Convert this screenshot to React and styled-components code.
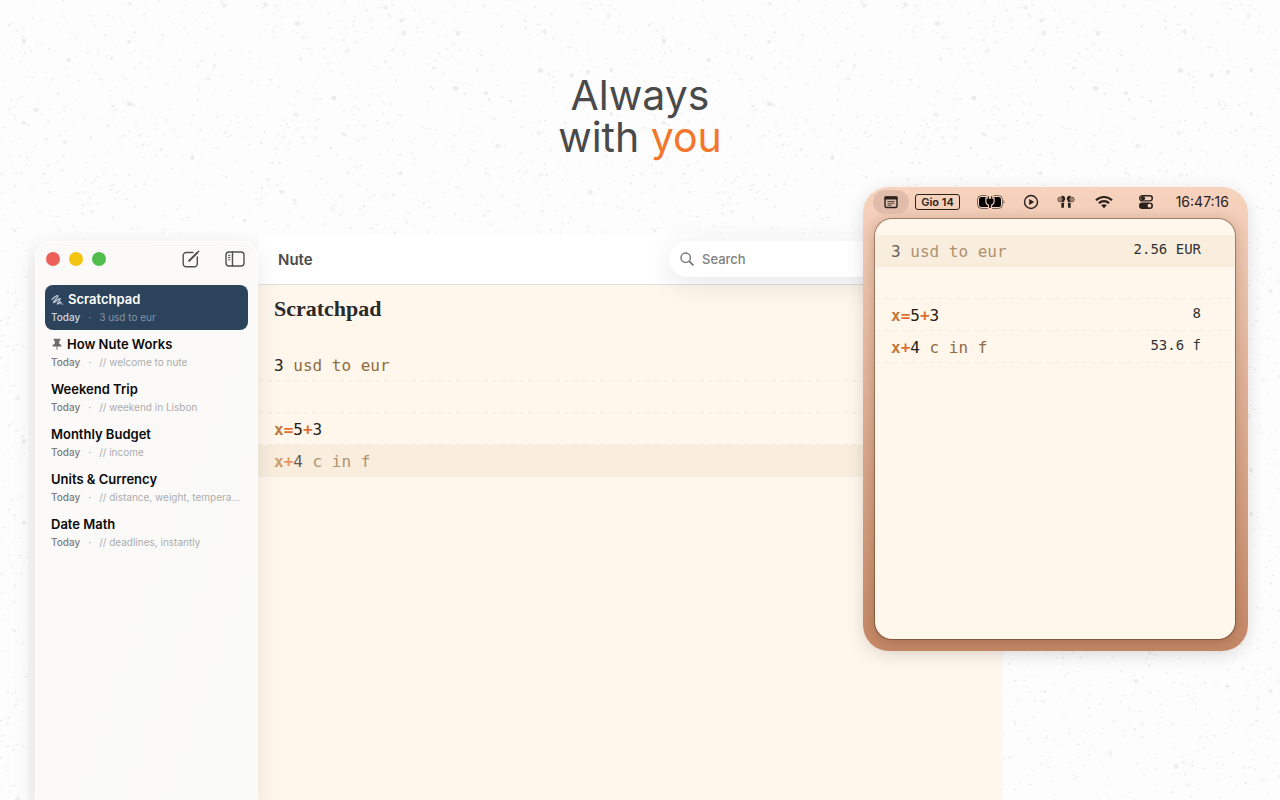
import React from "react";
import styled, { createGlobalStyle } from "styled-components";

const sans = `Inter, "Liberation Sans", sans-serif`;
const mono = `"DejaVu Sans Mono", "Liberation Mono", monospace`;

const GlobalStyle = createGlobalStyle`
  * {
    box-sizing: border-box;
  }
  body {
    margin: 0;
    background: #fdfdfd;
    font-family: ${sans};
    color: #1d1d1f;
  }
  h1, h2, ul {
    margin: 0;
    padding: 0;
  }
  button {
    border: 0;
    padding: 0;
    background: none;
    font: inherit;
    color: inherit;
  }
`;

const Page = styled.main`
  position: relative;
  display: flex;
  flex-direction: column;
  height: 100vh;
  min-height: 680px;
  overflow: hidden;
`;

const Paper = styled.svg`
  position: absolute;
  inset: 0;
  width: 100%;
  height: 100%;
`;

const Headline = styled.h1`
  position: relative;
  padding: 74px 0 29px;
  font-size: 41px;
  line-height: 42px;
  font-weight: 400;
  text-align: center;
  color: #4a4a4a;
  span {
    color: #f2762c;
  }
`;

const Stage = styled.div`
  position: relative;
  flex: 1;
  display: flex;
  padding: 47px 278px 0 28px;
`;

const Window = styled.section`
  flex: 1;
  display: grid;
  grid-template-columns: 230px 1fr;
  border-radius: 20px 0 0 0;
  background: linear-gradient(#fcfcfc, #f7f7f7 40px);
`;

const Sidebar = styled.aside`
  position: relative;
  z-index: 1;
  margin: 7px 0 0 7px;
  padding: 0 10px;
  border: 1px solid #fff;
  border-bottom: 0;
  border-radius: 16px 16px 0 0;
  background: linear-gradient(110deg, #fbfaf8, #f9f9f8);
  box-shadow: 0 8px 26px rgba(0, 0, 0, 0.09);
`;

const SidebarTop = styled.div`
  display: flex;
  align-items: center;
  height: 34px;
  gap: 9px;
  margin-bottom: 9px;
`;

const Light = styled.button`
  width: 14px;
  height: 14px;
  border-radius: 50%;
  background: ${(p) => p.$color};
`;

const ToolButton = styled.button`
  display: flex;
  margin-left: ${(p) => (p.$first ? "auto" : "16px")};
  margin-right: ${(p) => (p.$first ? "0" : "2px")};
`;

const NoteList = styled.ul`
  list-style: none;
  margin: 0 -1px;
`;

const NoteButton = styled.button`
  display: block;
  width: 100%;
  height: 45px;
  padding: 1px 6px 0;
  border-radius: 8px;
  text-align: left;
  color: ${(p) => (p.$active ? "#fff" : "#0b0b0b")};
  background: ${(p) => (p.$active ? "#2c435c" : "transparent")};
`;

const NoteName = styled.span`
  display: flex;
  align-items: center;
  gap: 4px;
  font-size: 13px;
  line-height: 19px;
  font-weight: 600;
`;

const NoteMeta = styled.span`
  display: flex;
  gap: 8px;
  font-size: 10px;
  line-height: 17px;
  color: ${(p) => (p.$active ? "#8492a3" : "#adadad")};
  b {
    font-weight: 500;
    color: ${(p) => (p.$active ? "#cfd6dd" : "#7c7c7c")};
  }
  span {
    overflow: hidden;
    white-space: nowrap;
    text-overflow: ellipsis;
  }
`;

const Main = styled.div`
  display: flex;
  flex-direction: column;
  min-width: 0;
  background: #fff6ec;
`;

const TitleBar = styled.header`
  display: flex;
  align-items: center;
  justify-content: space-between;
  height: 51px;
  padding: 0 10px 0 20px;
  border-bottom: 1px solid #dfdfe3;
  background: #fff;
  font-size: 15px;
  font-weight: 600;
  color: #4c4c4c;
`;

const SearchBox = styled.label`
  display: flex;
  align-items: center;
  gap: 8px;
  width: 323px;
  height: 36px;
  padding: 0 11px;
  border-radius: 18px;
  background: #fff;
  box-shadow: 0 6px 30px rgba(0, 0, 0, 0.1);
  input {
    flex: 1;
    min-width: 0;
    padding: 0;
    border: 0;
    outline: 0;
    background: none;
    font: 500 13px ${sans};
  }
  input::placeholder {
    color: #808080;
  }
`;

const DocTitle = styled.h2`
  height: 64px;
  padding: 8px 16px;
  font-family: "Liberation Serif", serif;
  font-size: 22px;
  line-height: 32px;
  font-weight: 700;
  color: #2a2a2a;
`;

const Line = styled.div`
  display: flex;
  justify-content: space-between;
  height: 32px;
  padding: 0 34px 0 16px;
  font-family: ${mono};
  font-size: 16px;
  line-height: 33px;
  white-space: pre;
  background:
    repeating-linear-gradient(90deg, #f6ebde 0 5px, transparent 5px 9px) bottom / 100% 1px no-repeat,
    ${(p) => (p.$current ? "#f9eddd" : "transparent")};
  code {
    font-family: inherit;
    opacity: ${(p) => (p.$current ? 0.7 : 1)};
  }
  output {
    font-size: 14px;
    line-height: 28px;
    color: #333;
  }
`;

const tokenColors = { num: "#231d15", unit: "#8f6c42", name: "#c07a40", op: "#e0702e" };

const Token = styled.span`
  color: ${(p) => tokenColors[p.$kind]};
  font-weight: ${(p) => (p.$kind === "name" || p.$kind === "op" ? 700 : 400)};
`;

const Popover = styled.section`
  position: absolute;
  z-index: 2;
  top: 0;
  right: 32px;
  width: 385px;
  padding: 0 13px 12px 12px;
  border-radius: 26px;
  background: linear-gradient(#f7d3be, #c58866);
  box-shadow: 0 4px 18px rgba(0, 0, 0, 0.13);
`;

const MenuBar = styled.div`
  display: flex;
  align-items: center;
  gap: 18px;
  height: 32px;
  margin: 0 -7px 0 -2px;
  padding: 0 13px 2px 0;
  color: #2a211c;
  button,
  svg {
    display: block;
    flex: none;
  }
`;

const NoteTab = styled.button`
  width: 36px;
  height: 24px;
  padding: 4px 10px;
  border-radius: 12px;
  background: #e0bdaa;
`;

const DateChip = styled.span`
  width: 45px;
  height: 16px;
  margin: 0 -1px 0 -12px;
  border: 1px solid #2a211c;
  border-radius: 3px;
  font-size: 11px;
  line-height: 14px;
  font-weight: 600;
  text-align: center;
`;

const ControlsButton = styled.button`
  padding-left: 8px;
`;

const Clock = styled.time`
  margin-left: auto;
  font-size: 14px;
  line-height: 16px;
`;

const Sheet = styled.div`
  height: 420px;
  padding-top: 16px;
  border-radius: 17px;
  background: #fff6ec;
  box-shadow: 0 0 0 1px rgba(70, 40, 20, 0.4), 0 2px 14px rgba(70, 40, 20, 0.3);
`;

const notes = [
  { name: "Scratchpad", preview: "3 usd to eur", icon: "scribble" },
  { name: "How Nute Works", preview: "// welcome to nute", icon: "pin" },
  { name: "Weekend Trip", preview: "// weekend in Lisbon" },
  { name: "Monthly Budget", preview: "// income" },
  { name: "Units & Currency", preview: "// distance, weight, temperature" },
  { name: "Date Math", preview: "// deadlines, instantly" },
];

const lines = [
  { tokens: [["num", "3"], ["unit", " usd to eur"]], result: "2.56 EUR" },
  { tokens: [] },
  { tokens: [["name", "x"], ["op", "="], ["num", "5"], ["op", "+"], ["num", "3"]], result: "8" },
  { tokens: [["name", "x"], ["op", "+"], ["num", "4"], ["unit", " c in f"]], result: "53.6 f" },
];

// small fixed-seed generator, so the paper looks the same on every load
function makeSpecks(count) {
  let seed = 7;
  const next = () => {
    seed = (seed * 16807) % 2147483647;
    return seed / 2147483647;
  };
  return Array.from({ length: count }, () => {
    const big = next() > 0.96;
    return {
      x: next() * 640,
      y: next() * 400,
      rx: big ? 1.6 + next() * 1.2 : 0.6 + next() * 0.9,
      ry: big ? 1.6 + next() : 0.5 + next() * 0.7,
      o: 0.4 + next() * 0.5,
    };
  });
}

const specks = makeSpecks(1900);

function PaperTexture() {
  return (
    <Paper aria-hidden="true">
      <defs>
        <pattern id="specks" width="640" height="400" patternUnits="userSpaceOnUse">
          {specks.map((s, i) => (
            <ellipse key={i} cx={s.x} cy={s.y} rx={s.rx} ry={s.ry} fill="#e8e8e7" opacity={s.o} />
          ))}
        </pattern>
      </defs>
      <rect width="100%" height="100%" fill="url(#specks)" />
    </Paper>
  );
}

function ScribbleIcon() {
  return (
    <svg width="13" height="12" viewBox="0 0 13 12" fill="none" stroke="#cbd3dc" strokeWidth="1.1" strokeLinecap="round" strokeLinejoin="round">
      <path d="M1 5.5C3.2 3.2 6.2 1 7 1.8C7.8 2.7 1.6 7.9 2.4 8.7C3.2 9.5 8.2 3.6 9.2 4.5C10 5.4 5.6 9.3 6.4 10.1C7.1 10.8 9.3 7.6 10 8.2C10.4 8.600 9.400 9.700 9.900 10" />
      <path d="M11.9 10h.1" />
    </svg>
  );
}

function PinIcon() {
  return (
    <svg width="12" height="13" viewBox="0 0 12 13" fill="#6b6b6b">
      <path d="M2.6.8h6.8v1.5L8.2 3v2.7c1.5.6 2.3 1.4 2.3 2.8h-4v2.3L6 12.6l-.5-1.8V8.5h-4c0-1.4.8-2.2 2.3-2.8V3L2.6 2.3z" />
    </svg>
  );
}

function ComposeIcon() {
  return (
    <svg width="18" height="18" viewBox="0 0 18 18" fill="none" stroke="#505050" strokeWidth="1.4" strokeLinecap="round" strokeLinejoin="round">
      <path d="M11 2.5H4.2a3 3 0 0 0-3 3v8.3a3 3 0 0 0 3 3h8.1a3 3 0 0 0 3-3V7" />
      <path d="M7.2 10.8l8-8" strokeWidth="2" />
      <path d="M16.400 1.600l.2-.2" strokeWidth="1.6" />
    </svg>
  );
}

function SidebarIcon() {
  return (
    <svg width="20" height="16" viewBox="0 0 20 16" fill="none" stroke="#505050" strokeWidth="1.4" strokeLinecap="round">
      <rect x="1" y="1" width="18" height="14" rx="3" />
      <path d="M7.5 1v14" />
      <path d="M3.5 4.2H5M3.5 6.5H5M3.5 8.8H5" strokeWidth="1.1" />
    </svg>
  );
}

function SearchIcon() {
  return (
    <svg width="14" height="14" viewBox="0 0 14 14" fill="none" stroke="#777" strokeWidth="1.4" strokeLinecap="round">
      <circle cx="5.7" cy="5.7" r="4.7" />
      <path d="M9.3 9.3l3.6 3.6" strokeWidth="1.8" />
    </svg>
  );
}

function NoteIcon() {
  return (
    <svg width="16" height="16" viewBox="0 0 16 16" fill="none" stroke="#2a211c">
      <rect x="2" y="3" width="12" height="10.5" rx="1.5" strokeWidth="1.4" />
      <path d="M1.5 4h13" strokeWidth="3" />
      <path d="M4.5 7.5h7M4.5 9.3h7M4.5 11.1h4" strokeWidth="1.1" opacity=".7" />
    </svg>
  );
}

function BatteryIcon() {
  return (
    <svg width="28" height="14" viewBox="0 0 28 14">
      <rect x=".5" y=".5" width="25" height="13" rx="4" fill="none" stroke="#2a211c" opacity=".6" />
      <rect x="2" y="2" width="22" height="10" rx="2.5" fill="#000" />
      <path d="M26.5 5v4c1.4-.4 1.4-3.6 0-4z" fill="#2a211c" opacity=".6" />
      <path
        d="M10.8 1.2h1v2.6h2.4V1.2h1v2.6h1.3v2.7c0 1.800-1 2.700-2.600 3v3.300h-1.800V9.500c-1.600-.3-2.600-1.200-2.600-3V3.800h1.300z"
        fill="#000"
        stroke="#f4cfba"
        strokeWidth="2.4"
        paintOrder="stroke"
      />
    </svg>
  );
}

function PlayIcon() {
  return (
    <svg width="16" height="16" viewBox="0 0 16 16">
      <circle cx="8" cy="8" r="6.5" fill="none" stroke="#2a211c" strokeWidth="1.4" />
      <path d="M6.2 5v6l5-3z" fill="#2a211c" />
    </svg>
  );
}

function AirpodsIcon() {
  return (
    <svg width="18" height="14" viewBox="0 0 18 14" fill="#2a211c">
      <path d="M4.2 1C7 .3 8.3 2.3 8.2 4.3l-1 1.8-.3 6.7H4.3V6.2L5.5 4z" />
      <path d="M13.8 1C11 .3 9.7 2.3 9.8 4.3l1 1.8.3 6.7h2.6V6.2L12.5 4z" />
      <ellipse cx="3" cy="4.5" rx="2.2" ry="2.4" fill="#a98a79" stroke="#5d483c" strokeWidth=".8" />
      <ellipse cx="15" cy="4.5" rx="2.2" ry="2.4" fill="#a98a79" stroke="#5d483c" strokeWidth=".8" />
      <path d="M4 7.4h3.2M10.8 7.4H14" stroke="#f4cfba" strokeWidth=".8" />
    </svg>
  );
}

function WifiIcon() {
  return (
    <svg width="20" height="14" viewBox="-2 0 20 14" fill="none" stroke="#2a211c" strokeWidth="2.2">
      <path d="M1 5.2c4.500-4.300 11.500-4.300 16 0" />
      <path d="M3.9 8.2c2.900-2.700 7.300-2.700 10.200 0" />
      <path d="M6.2 10.3c1.600-1.500 4-1.500 5.600 0L9 13.200z" fill="#2a211c" stroke="none" />
    </svg>
  );
}

function ControlsIcon() {
  return (
    <svg width="14" height="14" viewBox="0 0 14 14">
      <rect x=".7" y=".7" width="12.6" height="5.2" rx="2.6" fill="none" stroke="#2a211c" strokeWidth="1.4" />
      <circle cx="4" cy="3.3" r="2.1" fill="#2a211c" />
      <rect x="0" y="7.5" width="14" height="6.5" rx="3.2" fill="#2a211c" />
      <circle cx="10.5" cy="10.7" r="1.9" fill="#f4cfba" />
    </svg>
  );
}

function Lines({ current, results }) {
  return lines.map((line, i) => (
    <Line key={i} $current={i === current}>
      <code>
        {line.tokens.map(([kind, text], j) => (
          <Token key={j} $kind={kind}>{text}</Token>
        ))}
      </code>
      {results && line.result && <output>{line.result}</output>}
    </Line>
  ));
}

function App() {
  return (
    <Page>
      <GlobalStyle />
      <PaperTexture />
      <Headline>
        Always
        <br />
        with <span>you</span>
      </Headline>
      <Stage>
        <Window>
          <Sidebar>
            <SidebarTop>
              <Light $color="#ee5f57" aria-label="Close" />
              <Light $color="#f2c40d" aria-label="Minimize" />
              <Light $color="#52bd4c" aria-label="Zoom" />
              <ToolButton $first aria-label="New note"><ComposeIcon /></ToolButton>
              <ToolButton aria-label="Toggle sidebar"><SidebarIcon /></ToolButton>
            </SidebarTop>
            <NoteList>
              {notes.map((note, i) => (
                <li key={note.name}>
                  <NoteButton $active={i === 0}>
                    <NoteName>
                      {note.icon === "scribble" && <ScribbleIcon />}
                      {note.icon === "pin" && <PinIcon />}
                      {note.name}
                    </NoteName>
                    <NoteMeta $active={i === 0}>
                      <b>Today</b>
                      <i>·</i>
                      <span>{note.preview}</span>
                    </NoteMeta>
                  </NoteButton>
                </li>
              ))}
            </NoteList>
          </Sidebar>
          <Main>
            <TitleBar>
              Nute
              <SearchBox>
                <SearchIcon />
                <input type="text" placeholder="Search" aria-label="Search" />
              </SearchBox>
            </TitleBar>
            <DocTitle>Scratchpad</DocTitle>
            <Lines current={3} />
          </Main>
        </Window>
        <Popover>
          <MenuBar>
            <NoteTab aria-label="Nute"><NoteIcon /></NoteTab>
            <DateChip>Gio 14</DateChip>
            <BatteryIcon />
            <PlayIcon />
            <AirpodsIcon />
            <WifiIcon />
            <ControlsButton aria-label="Control centre"><ControlsIcon /></ControlsButton>
            <Clock>16:47:16</Clock>
          </MenuBar>
          <Sheet>
            <Lines current={0} results />
          </Sheet>
        </Popover>
      </Stage>
    </Page>
  );
}

export default App;
